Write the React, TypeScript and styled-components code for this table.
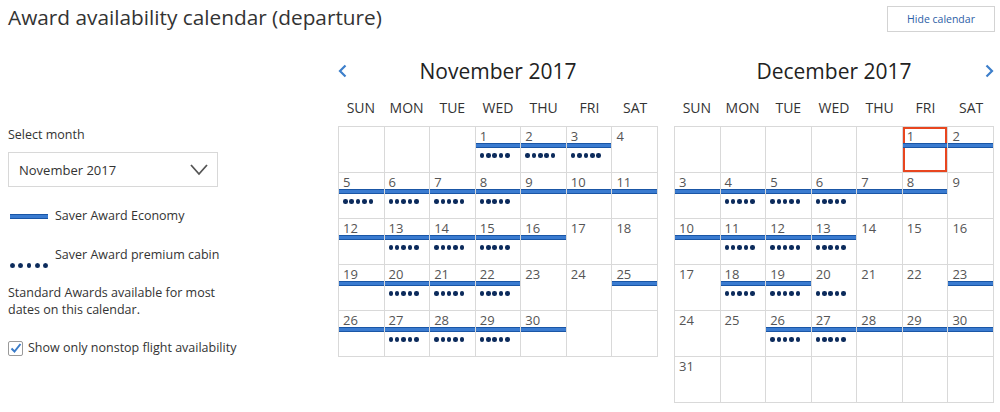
import styled, { createGlobalStyle } from 'styled-components';

type Mark = '' | 'b' | 'd' | 'bd';

type MonthData = {
  title: string;
  offset: number;
  marks: Mark[];
  selected?: number;
  nav: 'prev' | 'next';
};

const WEEKDAYS = ['SUN', 'MON', 'TUE', 'WED', 'THU', 'FRI', 'SAT'];

const november: MonthData = {
  title: 'November 2017',
  offset: 3,
  nav: 'prev',
  // prettier-ignore
  marks: [
    'bd', 'bd', 'bd', '',
    'bd', 'bd', 'bd', 'bd', 'b', 'b', 'b',
    'b', 'bd', 'bd', 'bd', 'b', '', '',
    'b', 'bd', 'bd', 'bd', '', '', 'b',
    'b', 'bd', 'bd', 'bd', 'b',
  ],
};

const december: MonthData = {
  title: 'December 2017',
  offset: 5,
  nav: 'next',
  selected: 1,
  // prettier-ignore
  marks: [
    'b', 'b',
    'b', 'bd', 'bd', 'bd', 'b', 'b', '',
    'b', 'bd', 'bd', 'bd', '', '', '',
    '', 'bd', 'bd', 'd', '', '', 'b',
    '', '', 'bd', 'bd', 'b', 'b', 'b',
    '',
  ],
};

function Dots({ size, spacing }: { size: number; spacing: number }) {
  return (
    <DotRow $spacing={spacing}>
      {[0, 1, 2, 3, 4].map((i) => (
        <Dot key={i} $size={size} />
      ))}
    </DotRow>
  );
}

function Month({ data }: { data: MonthData }) {
  const cells: ({ day: number; mark: Mark } | null)[] = [];
  for (let i = 0; i < data.offset; i++) cells.push(null);
  data.marks.forEach((mark, i) => cells.push({ day: i + 1, mark }));
  while (cells.length % 7 !== 0) cells.push(null);

  return (
    <MonthWrapper>
      <MonthHeader>
        <Nav>
          {data.nav === 'prev' && (
            <svg width="10" height="14" viewBox="0 0 10 14">
              <path d="M7.5 1.5 L2 7 L7.5 12.5" fill="none" stroke="#3d7fcb" strokeWidth="2.2" />
            </svg>
          )}
        </Nav>
        <MonthTitle>{data.title}</MonthTitle>
        <Nav $end>
          {data.nav === 'next' && (
            <svg width="10" height="14" viewBox="0 0 10 14">
              <path d="M2.5 1.5 L8 7 L2.5 12.5" fill="none" stroke="#3d7fcb" strokeWidth="2.2" />
            </svg>
          )}
        </Nav>
      </MonthHeader>

      <Weekdays>
        {WEEKDAYS.map((d) => (
          <Weekday key={d}>{d}</Weekday>
        ))}
      </Weekdays>

      <Grid>
        {cells.map((cell, i) =>
          cell ? (
            <Cell key={i} $selected={data.selected === cell.day}>
              <DayNum>{cell.day}</DayNum>
              <BarSlot>{cell.mark.includes('b') && <Bar />}</BarSlot>
              {cell.mark.includes('d') && <Dots size={4.5} spacing={1.9} />}
            </Cell>
          ) : (
            <Cell key={i} />
          )
        )}
      </Grid>
    </MonthWrapper>
  );
}

export default function App() {
  return (
    <>
      <GlobalStyle />
      <Page>
        <Header>
          <Title>Award availability calendar (departure)</Title>
          <HideButton>Hide calendar</HideButton>
        </Header>

        <Body>
          <Sidebar>
            <Label>Select month</Label>
            <Select>
              <span>November 2017</span>
              <svg width="18" height="12" viewBox="0 0 18 12">
                <path d="M1 1 L9 10 L17 1" fill="none" stroke="#555" strokeWidth="1.8" />
              </svg>
            </Select>

            <LegendRow>
              <LegendMark>
                <Bar />
              </LegendMark>
              <span>Saver Award Economy</span>
            </LegendRow>

            <LegendRow $premium>
              <LegendMark $dots>
                <Dots size={5} spacing={3.4} />
              </LegendMark>
              <span>Saver Award premium cabin</span>
            </LegendRow>

            <Note>Standard Awards available for most dates on this calendar.</Note>

            <CheckRow>
              <CheckBox>
                <svg width="12" height="12" viewBox="0 0 12 12">
                  <path d="M1.5 6.5 L4.5 9.5 L10.5 2" fill="none" stroke="#3b7cc9" strokeWidth="2" />
                </svg>
              </CheckBox>
              <span>Show only nonstop flight availability</span>
            </CheckRow>
          </Sidebar>

          <Calendars>
            <Month data={november} />
            <Month data={december} />
          </Calendars>
        </Body>
      </Page>
    </>
  );
}

const GlobalStyle = createGlobalStyle`
  body {
    margin: 0;
    background: #fff;
    font-family: "Open Sans", "Liberation Sans", sans-serif;
    color: #333;
  }
`;

const Page = styled.div`
  width: 1000px;
  height: 412px;
  padding: 0 5px 0 8px;
  box-sizing: border-box;
  overflow: hidden;
`;

const Header = styled.header`
  display: flex;
  justify-content: space-between;
  align-items: flex-start;
  height: 40px;
`;

const Title = styled.h1`
  margin: 0;
  font-size: 20.8px;
  font-weight: 400;
  line-height: 34px;
  color: #333;
`;

const HideButton = styled.button`
  margin-top: 6px;
  width: 108px;
  height: 26px;
  border: 1px solid #d3d3d3;
  background: #fff;
  color: #2c5ea6;
  font-family: inherit;
  font-size: 10.5px;
  padding: 0;
`;

const Body = styled.div`
  display: flex;
`;

const Sidebar = styled.aside`
  width: 330px;
  padding-top: 86px;
  font-size: 12.5px;
  line-height: 18px;
  color: #333;
`;

const Label = styled.div``;

const Select = styled.div`
  margin-top: 8px;
  width: 210px;
  height: 35px;
  box-sizing: border-box;
  border: 1px solid #d8d8d8;
  display: flex;
  align-items: center;
  justify-content: space-between;
  padding: 0 9px 0 10px;
  font-size: 13px;
`;

const LegendRow = styled.div<{ $premium?: boolean }>`
  display: flex;
  align-items: ${(p) => (p.$premium ? 'flex-start' : 'center')};
  gap: 7px;
  margin-top: ${(p) => (p.$premium ? '21px' : '20px')};
  height: ${(p) => (p.$premium ? '20px' : '18px')};
  padding-left: 2px;
`;

const LegendMark = styled.div<{ $dots?: boolean }>`
  width: 38px;
  align-self: ${(p) => (p.$dots ? 'flex-end' : 'center')};
  margin-bottom: ${(p) => (p.$dots ? '-2px' : '0')};
  display: flex;
  flex-direction: column;
  justify-content: center;

  & > div {
    margin-left: 0;
  }
`;

const Note = styled.p`
  margin: 19px 0 0;
  width: 225px;
  line-height: 16.5px;
`;

const CheckRow = styled.label`
  display: flex;
  align-items: center;
  gap: 5px;
  margin-top: 21px;
`;

const CheckBox = styled.span`
  width: 15px;
  height: 15px;
  box-sizing: border-box;
  border: 1px solid #9a9a9a;
  border-radius: 2px;
  display: flex;
  align-items: center;
  justify-content: center;
  background: #fff;
`;

const Calendars = styled.div`
  display: flex;
  gap: 16px;
  margin-top: 17px;
`;

const MonthWrapper = styled.section`
  width: 320px;
`;

const MonthHeader = styled.div`
  display: grid;
  grid-template-columns: 14px 1fr 14px;
  align-items: center;
  height: 28px;
`;

const Nav = styled.div<{ $end?: boolean }>`
  display: flex;
  justify-content: ${(p) => (p.$end ? 'flex-end' : 'flex-start')};
  align-items: center;
`;

const MonthTitle = styled.h2`
  margin: 0;
  text-align: center;
  font-size: 21px;
  font-weight: 400;
  color: #222;
`;

const Weekdays = styled.div`
  display: grid;
  grid-template-columns: repeat(7, 1fr);
  height: 41px;
  padding-top: 13px;
  box-sizing: border-box;
`;

const Weekday = styled.div`
  text-align: center;
  font-size: 14px;
  line-height: 20px;
  color: #333;
`;

const Grid = styled.div`
  display: grid;
  grid-template-columns: repeat(7, 1fr);
  grid-auto-rows: 45px;
  gap: 1px;
  background: #d9d9d9;
  border: 1px solid #d9d9d9;
`;

const Cell = styled.div<{ $selected?: boolean }>`
  background: #fff;
  box-shadow: ${(p) => (p.$selected ? 'inset 0 0 0 2px #e8461f' : 'none')};
  display: flex;
  flex-direction: column;
`;

const DayNum = styled.div`
  height: 16px;
  padding-left: 4px;
  font-size: 13px;
  line-height: 18px;
  color: #555;
`;

const BarSlot = styled.div`
  height: 5px;
`;

const Bar = styled.div`
  height: 5px;
  box-sizing: border-box;
  background: #3a7bd0;
  border-top: 1.5px solid #1a56a6;
  border-bottom: 1.5px solid #1a56a6;
`;

const DotRow = styled.div<{ $spacing: number }>`
  display: flex;
  gap: ${(p) => p.$spacing}px;
  margin: 5px 0 0 4px;
`;

const Dot = styled.span<{ $size: number }>`
  width: ${(p) => p.$size}px;
  height: ${(p) => p.$size}px;
  border-radius: 50%;
  background: #0c2b5c;
`;
